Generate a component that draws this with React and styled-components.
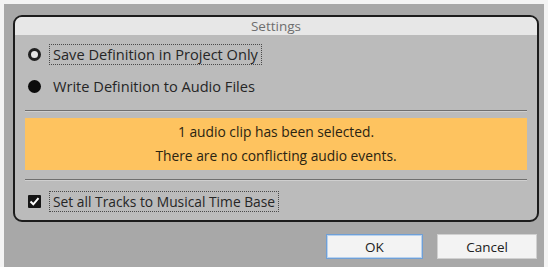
import styled, { createGlobalStyle } from "styled-components";

const GlobalStyle = createGlobalStyle`
    html, body {
        margin: 0;
        background: #f4f4f4;
    }
    body {
        font-family: "Open Sans", "Liberation Sans", sans-serif;
    }
`

const Frame = styled.div`
    margin: 4px 4px 0 4px;
    height: 263px;
    background: #a8a8a8;
    padding: 11px 5px 0 9px;
    box-sizing: border-box;
`

const Panel = styled.div`
    width: 526px;
    height: 207px;
    box-sizing: border-box;
    border: 2px solid #1c1c1c;
    border-radius: 9px;
    background: #bbbbbb;
    overflow: hidden;
    display: flex;
    flex-direction: column;
`

const Header = styled.div`
    height: 18px;
    background: #e7e7e7;
    color: #6e6e6e;
    font-size: 13.5px;
    line-height: 18px;
    text-align: center;
`

const Body = styled.div`
    padding: 8px 10px 0 10px;
    display: flex;
    flex-direction: column;
`

const OptionRow = styled.div`
    display: flex;
    align-items: center;
    gap: 8px;
    height: 22px;
    margin: 0 0 10px 3px;
`

const Radio = styled.span`
    width: 13px;
    height: 13px;
    border-radius: 50%;
    box-sizing: border-box;
    background: ${p => (p.$filled ? "#0c0c0c" : "#e4e4e4")};
    border: ${p => (p.$filled ? "none" : "3px solid #202020")};
    flex: none;
`

const Check = styled.span`
    width: 13px;
    height: 13px;
    background: #151515;
    border-radius: 1px;
    display: flex;
    align-items: center;
    justify-content: center;
    flex: none;
`

const Label = styled.span`
    font-size: ${p => p.$size || 14}px;
    color: #262626;
    padding: 0 3px;
    height: 21px;
    line-height: 19px;
    box-sizing: border-box;
    border: 1px dotted ${p => (p.$focused ? "#4a4a4a" : "transparent")};
`

const Separator = styled.div`
    height: 1px;
    background: #6f6f6f;
    border-bottom: 1px solid #cfcfcf;
    margin: ${p => p.$margin};
`

const Notice = styled.div`
    background: #fec35f;
    height: 52px;
    display: flex;
    flex-direction: column;
    justify-content: center;
    align-items: center;
    gap: 6px;
    font-size: 13.8px;
    color: #2a2412;

    p {
        margin: 0;
        line-height: 18px;
    }
`

const ButtonRow = styled.div`
    display: flex;
    justify-content: flex-end;
    gap: 14px;
    padding: 12px 2px 0 0;
    width: 526px;
    box-sizing: border-box;
`

const Button = styled.button`
    width: ${p => p.$width}px;
    height: 25px;
    font-family: inherit;
    font-size: 13.5px;
    color: #202020;
    background: #f3f3f3;
    border: 1px solid ${p => (p.$primary ? "#6f9fd6" : "#d0d0d0")};
    box-shadow: ${p => (p.$primary ? "inset 0 0 0 1px #b8d2ee" : "none")};
    padding: 0;
`

export default function App() {
    return (
        <>
            <GlobalStyle />
            <Frame>
                <Panel>
                    <Header>Settings</Header>
                    <Body>
                        <OptionRow>
                            <Radio />
                            <Label $focused $size={14.6}>Save Definition in Project Only</Label>
                        </OptionRow>
                        <OptionRow>
                            <Radio $filled />
                            <Label $size={14.6}>Write Definition to Audio Files</Label>
                        </OptionRow>
                        <Separator $margin="3px 0 6px 0" />
                        <Notice>
                            <p>1 audio clip has been selected.</p>
                            <p>There are no conflicting audio events.</p>
                        </Notice>
                        <Separator $margin="9px 0 9px 0" />
                        <OptionRow>
                            <Check>
                                <svg width="11" height="11" viewBox="0 0 11 11">
                                    <path d="M1.5 5.5 L4.3 8.3 L9.5 2.2" fill="none" stroke="#fff" strokeWidth="2" />
                                </svg>
                            </Check>
                            <Label $focused $size={13.8}>Set all Tracks to Musical Time Base</Label>
                        </OptionRow>
                    </Body>
                </Panel>
                <ButtonRow>
                    <Button $primary $width={97}>OK</Button>
                    <Button $width={100}>Cancel</Button>
                </ButtonRow>
            </Frame>
        </>
    )
}
